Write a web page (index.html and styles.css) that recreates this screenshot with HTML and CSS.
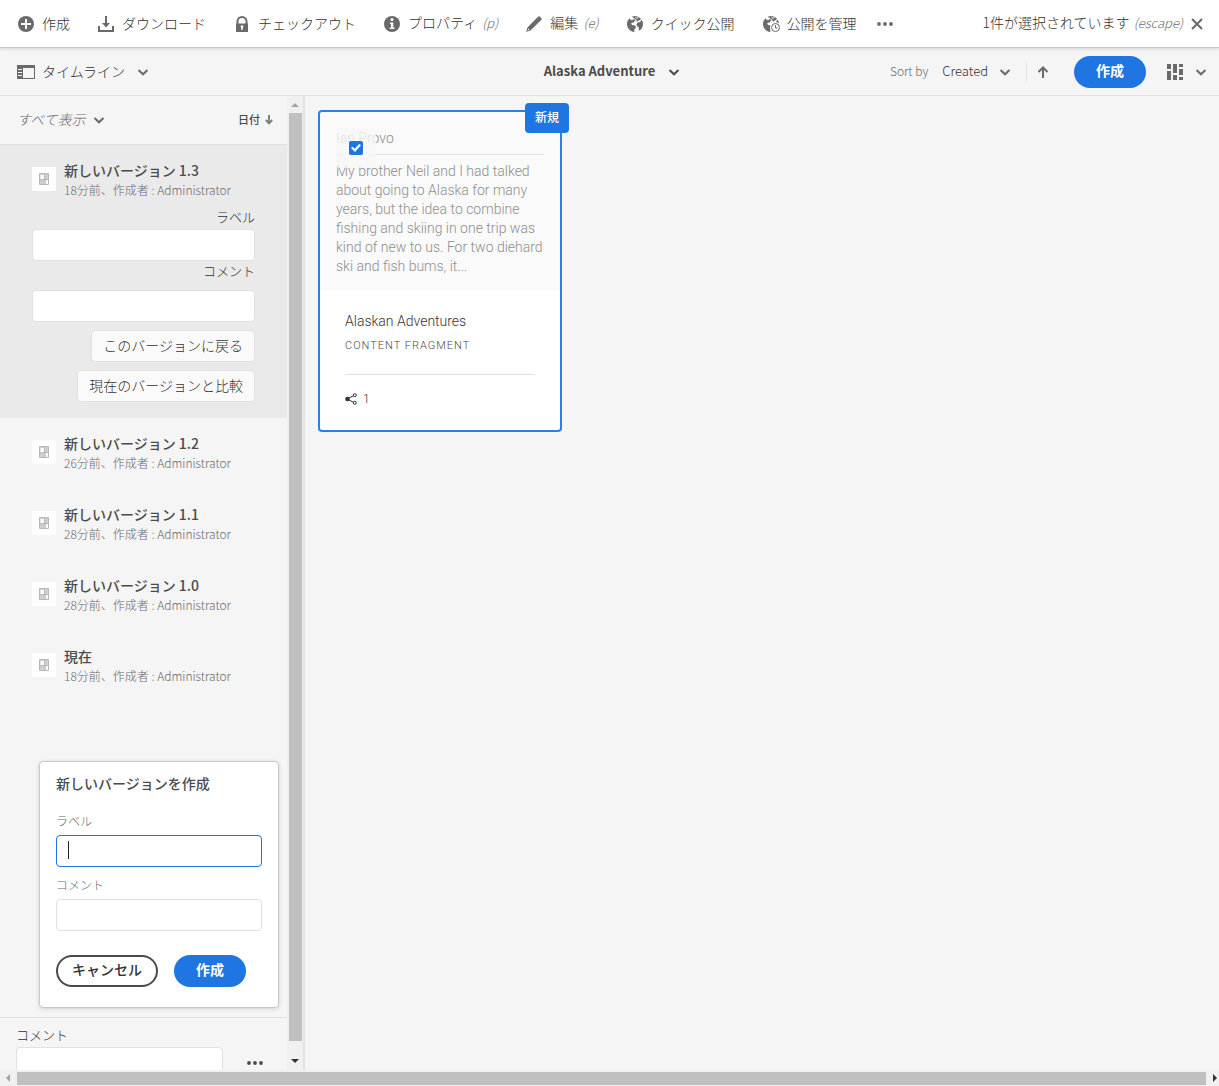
FILE: index.html
```html
<!DOCTYPE html>
<html lang="ja">
<head>
<meta charset="utf-8">
<meta name="viewport" content="width=device-width, initial-scale=1">
<title>Alaska Adventure</title>
<link rel="stylesheet" href="styles.css">
</head>
<body>
<svg class="sprite" aria-hidden="true">
  <symbol id="chevron" viewBox="0 0 12 12"><path d="M1.500 4 6 8.300 10.500 4" fill="none" stroke="currentColor" stroke-width="2"/></symbol>
  <symbol id="more" viewBox="0 0 16 16"><circle cx="2" cy="8" r="1.900"/><circle cx="8" cy="8" r="1.900"/><circle cx="14" cy="8" r="1.900"/></symbol>
  <symbol id="fragment" viewBox="0 0 10 12"><path d="M.5.5h9v11h-9z" fill="#d0d0d0" stroke="#b8b8b8"/><path d="M1.500 2H5v4H1.500zM6.500 7H9v4H6.500z" fill="#fafafa"/><path d="M5.500 1v6M1 7h5v4M6 6.500h3" fill="none" stroke="#b8b8b8"/></symbol>
  <symbol id="globe" viewBox="0 0 16 16"><path d="M2.600 2.200C1 3.700 0 5.700 0 8c0 3.600 2.400 6.700 5.700 7.700l1.700.3-.2-2.300 1.400-1.600.2-1.800-1.700-1.100-2-.2-1-1.500 1.200-1 1.500.3.300-1.300 1.400-1L7.200 3l-1 .3-.8 1L3.600 3.700z"/><path d="M5.200.5 8 0c2.300 0 4.400 1 5.800 2.500l-.6 1.600-1.700.3-.6 1.200-1.400-.4-.3-1.700L7.800 3 7 1.800l-1.500-.1z"/><path d="M14.500 3.500A8 8 0 0 1 16 8c0 2.700-1.300 5-3.300 6.500l-1-.6.200-2.300-1.700-1.300-.8-2 1.300-1.800 2.400-.4z"/><path d="m8.500 1.200 1.400 1 1.600-.7" fill="none" stroke="#fff"/></symbol>
</svg>

<div class="app">
  <header class="actions">
    <div class="actions-group">
      <button class="action" type="button">
        <svg class="icon" viewBox="0 0 16 16"><circle cx="8" cy="8" r="8"/><path d="M8 3v10M3 8h10" stroke="#fff" stroke-width="2"/></svg>
        <span>作成</span>
      </button>
      <button class="action" type="button">
        <svg class="icon" viewBox="0 0 16 16"><path d="M7 0h2v7h3l-4 4.500L4 7h3zM0 10h2v4h12v-4h2v6H0z"/></svg>
        <span>ダウンロード</span>
      </button>
      <button class="action" type="button">
        <svg class="icon" viewBox="0 0 16 16"><path d="M3.500 8V5.500a4.500 4.500 0 0 1 9 0V8" fill="none" stroke="currentColor" stroke-width="2"/><path d="M2 7.500h12V16H2z"/><path d="M8 9.300a1.400 1.400 0 0 1 .7 2.600V14H7.300v-2.100A1.400 1.400 0 0 1 8 9.300z" fill="#fff"/></svg>
        <span>チェックアウト</span>
      </button>
      <button class="action" type="button">
        <svg class="icon" viewBox="0 0 16 16"><circle cx="8" cy="8" r="8"/><circle cx="8" cy="3.600" r="1.500" fill="#fff"/><path d="M6 6.500h3.300v5H10.500V13H5.700v-1.500H7V8H6z" fill="#fff"/></svg>
        <span>プロパティ <kbd>(p)</kbd></span>
      </button>
      <button class="action" type="button">
        <svg class="icon" viewBox="0 0 16 16"><path d="M12.300.6a1 1 0 0 1 1.400 0l1.700 1.700a1 1 0 0 1 0 1.400L4.500 14.500.2 15.800l1.200-4.300zM2.300 12.500l-.7 1.900 1.900-.7z" fill-rule="evenodd"/></svg>
        <span>編集 <kbd>(e)</kbd></span>
      </button>
      <button class="action" type="button">
        <svg class="icon"><use href="#globe"/></svg>
        <span>クイック公開</span>
      </button>
      <button class="action" type="button">
        <svg class="icon icon-wide" viewBox="0 0 18 16"><use href="#globe" width="16" height="16"/><circle cx="12.500" cy="11.500" r="5.500" fill="#fff"/><circle cx="12.500" cy="11.500" r="4" fill="none" stroke="currentColor"/><path d="M12.500 9v3h2" fill="none" stroke="currentColor"/></svg>
        <span>公開を管理</span>
      </button>
      <button class="action action-more" type="button" aria-label="その他"><svg class="icon"><use href="#more"/></svg></button>
    </div>
    <button class="action selection" type="button">
      <span>1件が選択されています <kbd>(escape)</kbd></span>
      <svg class="icon icon-close" viewBox="0 0 12 12"><path d="m1 1 10 10M11 1 1 11" stroke="currentColor" stroke-width="2"/></svg>
    </button>
  </header>

  <div class="viewbar">
    <button class="action rail-toggle" type="button">
      <svg class="icon icon-rail" viewBox="0 0 18 14"><path d="M0 0h18v14H0zM6 3v10h11V3zM1 4v1h4V4zM1 7v1h4V7zM1 10v1h4v-1z" fill-rule="evenodd"/></svg>
      <span>タイムライン</span>
      <svg class="chevron"><use href="#chevron"/></svg>
    </button>
    <button class="action crumb" type="button"><span>Alaska Adventure</span><svg class="chevron"><use href="#chevron"/></svg></button>
    <div class="viewbar-end">
      <span class="sort-label">Sort by</span>
      <button class="action sort-field" type="button"><span>Created</span><svg class="chevron"><use href="#chevron"/></svg></button>
      <button class="action sort-dir" type="button" aria-label="昇順"><svg class="arrow" viewBox="0 0 12 12"><path d="M6 12V2M1.500 6 6 1.500 10.500 6" fill="none" stroke="currentColor" stroke-width="2"/></svg></button>
      <button class="pill primary" type="button">作成</button>
      <button class="action view-switch" type="button" aria-label="カード表示"><svg class="icon icon-rail" viewBox="0 0 18 16"><path d="M1 0h4v5H1zM1 7h4v9H1zM7 0h4v9H7zM7 11h4v5H7zM13 0h4v3h-4zM13 5h4v6h-4zM13 13h4v3h-4z"/></svg><svg class="chevron"><use href="#chevron"/></svg></button>
    </div>
  </div>

  <div class="workspace">
    <aside class="rail">
      <div class="rail-filter">
        <button class="action filter" type="button"><em>すべて表示</em><svg class="chevron"><use href="#chevron"/></svg></button>
        <button class="action date" type="button"><span>日付</span><svg class="arrow-small" viewBox="0 0 8 10"><path d="M4 0v8M.8 5 4 8.300 7.200 5" fill="none" stroke="currentColor" stroke-width="2"/></svg></button>
      </div>

      <ol class="timeline">
        <li class="entry selected">
          <div class="entry-head">
            <span class="thumb"><svg><use href="#fragment"/></svg></span>
            <div><h3>新しいバージョン 1.3</h3><p>18分前、作成者 : Administrator</p></div>
          </div>
          <form class="entry-form">
            <label for="v-label">ラベル</label>
            <input class="field" id="v-label" type="text">
            <label class="comment-label" for="v-comment">コメント</label>
            <input class="field" id="v-comment" type="text">
            <button class="plain" type="button">このバージョンに戻る</button>
            <button class="plain" type="button">現在のバージョンと比較</button>
          </form>
        </li>
        <li class="entry"><div class="entry-head"><span class="thumb"><svg><use href="#fragment"/></svg></span><div><h3>新しいバージョン 1.2</h3><p>26分前、作成者 : Administrator</p></div></div></li>
        <li class="entry"><div class="entry-head"><span class="thumb"><svg><use href="#fragment"/></svg></span><div><h3>新しいバージョン 1.1</h3><p>28分前、作成者 : Administrator</p></div></div></li>
        <li class="entry"><div class="entry-head"><span class="thumb"><svg><use href="#fragment"/></svg></span><div><h3>新しいバージョン 1.0</h3><p>28分前、作成者 : Administrator</p></div></div></li>
        <li class="entry"><div class="entry-head"><span class="thumb"><svg><use href="#fragment"/></svg></span><div><h3>現在</h3><p>18分前、作成者 : Administrator</p></div></div></li>
      </ol>

      <form class="popover">
        <h2>新しいバージョンを作成</h2>
        <label for="new-label">ラベル</label>
        <input class="field focused" id="new-label" type="text">
        <label for="new-comment">コメント</label>
        <input class="field" id="new-comment" type="text">
        <div class="popover-actions">
          <button class="pill outline" type="button">キャンセル</button>
          <button class="pill primary" type="button">作成</button>
        </div>
      </form>

      <div class="comment-bar">
        <label for="comment">コメント</label>
        <div class="comment-row">
          <input class="field" id="comment" type="text">
          <button class="action" type="button" aria-label="その他"><svg class="icon"><use href="#more"/></svg></button>
        </div>
      </div>
    </aside>

    <div class="scroll scroll-y" aria-hidden="true">
      <svg class="tip" viewBox="0 0 8 4"><path d="M0 4 4 0l4 4z" fill="#a3a3a3"/></svg>
      <span class="scroll-thumb"></span>
      <svg class="tip" viewBox="0 0 8 4"><path d="M0 0h8L4 4z"/></svg>
    </div>

    <main class="content">
      <article class="card">
        <div class="preview">
          <h4>Ian Provo</h4>
          <p>My brother Neil and I had talked about going to Alaska for many years, but the idea to combine fishing and skiing in one trip was kind of new to us. For two diehard ski and fish bums, it...</p>
          <label class="select-box"><input type="checkbox" aria-label="選択" checked></label>
        </div>
        <div class="card-info">
          <h3>Alaskan Adventures</h3>
          <p class="kind">Content Fragment</p>
          <p class="refs"><svg viewBox="0 0 12 12"><circle cx="2.500" cy="6" r="2.300"/><path d="M2 6 9.500 2.200M2 6l7.500 3.800" stroke="currentColor"/><circle cx="9.800" cy="2.200" r="1.500" fill="#fff" stroke="currentColor"/><circle cx="9.800" cy="9.800" r="1.500" fill="#fff" stroke="currentColor"/></svg><span>1</span></p>
        </div>
        <span class="badge">新規</span>
      </article>
    </main>
  </div>

  <div class="scroll scroll-x" aria-hidden="true">
    <svg class="tip" viewBox="0 0 4 8"><path d="M4 0v8L0 4z" fill="#a3a3a3"/></svg>
    <span class="scroll-thumb"></span>
    <svg class="tip" viewBox="0 0 4 8"><path d="M0 0v8l4-4z"/></svg>
  </div>
</div>
</body>
</html>
```
FILE: styles.css
```css
* { box-sizing: border-box; }

body {
  margin: 0;
  background: #f5f5f5;
  color: #323232;
  font: 14px/20px "Noto Sans CJK JP", sans-serif;
  font-weight: 300;
}

h2, h3, h4, p, ol { margin: 0; padding: 0; font: inherit; }
button, input { margin: 0; font: inherit; color: inherit; }
svg { display: block; flex: none; fill: currentColor; }
.sprite { position: absolute; width: 0; height: 0; }

.app { display: flex; flex-direction: column; height: 100vh; overflow: hidden; }

.action {
  display: flex;
  align-items: center;
  gap: 8px;
  padding: 0;
  border: 0;
  background: none;
  white-space: nowrap;
}
.action span, .action em { padding-bottom: 2px; }
.action kbd { margin-left: 2px; font: inherit; font-size: 13px; font-style: italic; color: #6a6a6a; }
.icon { width: 16px; height: 16px; color: #6a6a6a; }
.icon-wide, .icon-rail { width: 18px; }
.icon-close { width: 12px; height: 12px; }
.chevron { width: 12px; height: 12px; color: #6a6a6a; }

/* Top action bar */
.actions {
  position: relative;
  display: flex;
  justify-content: space-between;
  align-items: center;
  height: 48px;
  flex: none;
  padding: 0 16px 0 18px;
  background: #fff;
  border-bottom: 1px solid #c8c8c8;
  box-shadow: 0 1px 3px rgba(0, 0, 0, .15);
}
.actions-group { display: flex; gap: 28px; }
.actions-group .icon-wide { margin-right: -2px; }
.action-more { margin-left: -8px; }
.selection kbd { margin-left: 1px; }

/* View bar */
.viewbar {
  display: grid;
  grid-template-columns: 1fr auto 1fr;
  align-items: center;
  height: 48px;
  flex: none;
  padding: 0 12px 0 17px;
  border-bottom: 1px solid #e1e1e1;
}
.rail-toggle { justify-self: start; gap: 7px; }
.rail-toggle .icon { height: 14px; }
.rail-toggle .chevron { margin-left: 5px; }
.crumb { gap: 13px; font-size: 13px; font-weight: 700; color: #4b4b4b; }
.crumb .chevron { color: #4b4b4b; }
.viewbar-end { display: flex; justify-content: flex-end; align-items: center; }
.sort-label { margin-right: 14px; padding-bottom: 2px; font-size: 12px; color: #6a6a6a; }
.sort-field { gap: 11px; font-size: 13px; }
.sort-dir { margin: 0 25px 0 15px; padding-left: 10px; border-left: 1px solid #e1e1e1; height: 18px; }
.arrow { width: 12px; height: 12px; color: #6a6a6a; }
.view-switch { gap: 11px; margin-left: 20px; }

.pill {
  height: 32px;
  padding: 0 22px 4px;
  border: 0;
  border-radius: 16px;
  font-weight: 700;
}
.primary { background: #1f76e3; color: #fff; }
.outline { padding: 0 14px 4px; border: 2px solid #4b4b4b; background: #fff; font-weight: 500; }

/* Workspace */
.workspace { display: flex; flex: 1; min-height: 0; }

.rail { display: flex; flex-direction: column; width: 287px; flex: none; }
.rail-filter {
  display: flex;
  justify-content: space-between;
  align-items: center;
  height: 49px;
  flex: none;
  padding: 0 14px 0 17px;
  border-bottom: 1px solid #e1e1e1;
}
.filter { color: #6a6a6a; gap: 8px; }
.date { gap: 5px; font-size: 11px; font-weight: 500; color: #4b4b4b; }
.arrow-small { width: 8px; height: 10px; color: #808080; }

.timeline { flex: 1 1 0; min-height: 0; overflow: hidden; list-style: none; }
.entry { padding: 15px 32px 16px; }
.selected { background: #eaeaea; }
.entry-head { display: flex; gap: 8px; }
.entry-head > div { white-space: nowrap; }
.entry h3 { font-weight: 500; color: #4b4b4b; }
.entry-head p { font-size: 12px; color: #6a6a6a; }
.thumb { display: grid; place-items: center; width: 24px; height: 24px; margin-top: 7px; background: #fff; }
.thumb svg { width: 10px; height: 12px; }
.entry-form { display: flex; flex-direction: column; align-items: flex-end; padding-top: 7px; }
.entry-form label { padding-bottom: 2px; font-size: 13px; }
.entry-form .comment-label { padding-bottom: 9px; }

.field {
  width: 100%;
  height: 32px;
  padding: 0 11px;
  border: 1px solid #e1e1e1;
  border-radius: 4px;
  background: #fff;
}
.focused {
  border-color: #1f76e3;
  outline: 0;
  background: linear-gradient(#222, #222) 11px 5px / 1px 18px no-repeat #fff;
}
.plain {
  height: 32px;
  margin-top: 8px;
  padding: 0 11px 2px;
  border: 1px solid #e1e1e1;
  border-radius: 4px;
  background: #fafafa;
}

.popover {
  margin: 0 8px 9px 39px;
  padding: 11px 16px 20px;
  border: 1px solid #c8c8c8;
  border-radius: 4px;
  background: #fff;
  box-shadow: 0 1px 4px rgba(0, 0, 0, .15);
}
.popover h2 { margin-bottom: 17px; font-weight: 500; color: #4b4b4b; }
.popover label { display: block; padding-bottom: 4px; font-size: 12px; color: #6a6a6a; }
.popover h2 + label { padding-top: 1px; }
.popover .field { display: block; margin-bottom: 8px; }
.popover-actions { display: flex; gap: 16px; padding-top: 16px; }

.comment-bar { height: 53px; flex: none; padding: 7px 16px 0; border-top: 1px solid #e1e1e1; overflow: hidden; }
.comment-bar label { display: block; padding-bottom: 2px; font-size: 13px; }
.comment-row { display: flex; align-items: center; gap: 24px; padding-right: 8px; }
.comment-row .icon { color: #4b4b4b; }

/* Scroll tracks */
.scroll { display: flex; align-items: center; flex: none; background: #f0f0f0; }
.scroll-thumb { flex: 1; background: #c0c0c0; }
.scroll-y { flex-direction: column; width: 18px; padding: 7px 2px; gap: 6px; border-right: 2px solid #e1e1e1; }
.scroll-y .scroll-thumb { width: 13px; }
.scroll-y .tip { width: 8px; height: 4px; }
.scroll-y .tip:last-child { margin-top: 12px; }
.scroll-x { height: 16px; padding: 0 2px 0 6px; gap: 7px; }
.scroll-x .scroll-thumb { height: 13px; }
.scroll-x .tip { width: 4px; height: 8px; }

/* Cards */
.content { flex: 1; padding: 14px 13px; }
.card {
  position: relative;
  width: 244px;
  border: 2px solid #2a80e8;
  border-radius: 4px;
  background: #fff;
  font-family: Roboto, "Noto Sans CJK JP", sans-serif;
}
.badge {
  position: absolute;
  top: -9px;
  right: -9px;
  padding: 5px 10px;
  border-radius: 4px;
  background: #1f76e3;
  color: #fff;
  font-size: 12px;
  font-weight: 500;
}
.preview { position: relative; padding: 16px; background: #fafafa; color: #8e8e8e; border-radius: 4px 4px 0 0; }
.preview h4 { margin-bottom: 7px; padding-bottom: 6px; border-bottom: 1px solid #e1e1e1; }
.preview p { line-height: 19px; margin-bottom: -1px; }
.select-box {
  position: absolute;
  top: 16px;
  left: 16px;
  display: grid;
  place-items: center;
  width: 40px;
  height: 40px;
  border-radius: 4px;
  background: rgba(247, 247, 247, .8);
}
.select-box input {
  display: grid;
  place-items: center;
  appearance: none;
  width: 14px;
  height: 14px;
  border-radius: 2px;
  background: #1f76e3;
}
.select-box input::after {
  content: "";
  width: 10px;
  height: 8px;
  background: #fff;
  clip-path: polygon(0 50%, 15% 35%, 38% 60%, 82% 0, 100% 15%, 40% 100%);
}
.card-info { padding: 20px 25px; }
.card-info h3 { padding-bottom: 5px; }
.kind { padding-bottom: 18px; border-bottom: 1px solid #e1e1e1; font-size: 11px; letter-spacing: 1px; text-transform: uppercase; color: #4b4b4b; }
.refs { display: flex; align-items: center; gap: 6px; padding: 14px 0 1px; font-size: 12px; }
.refs svg { width: 12px; height: 12px; }
```
